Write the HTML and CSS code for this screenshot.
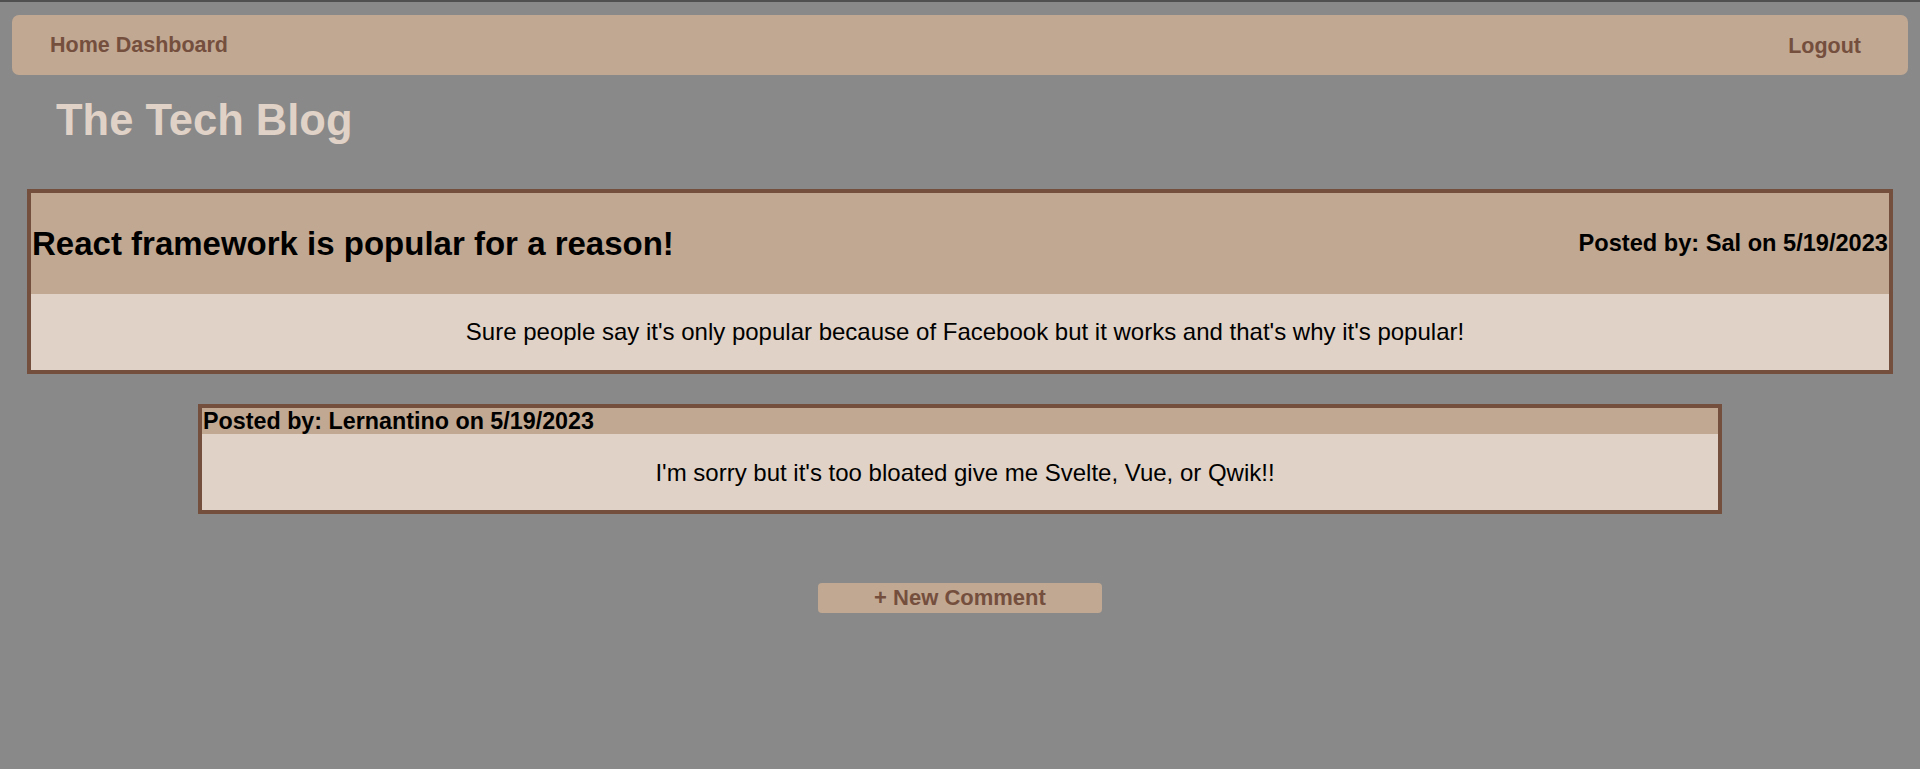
FILE: index.html
```html
<!DOCTYPE html>
<html lang="en">
<head>
<meta charset="utf-8">
<title>The Tech Blog</title>
<link rel="stylesheet" href="styles.css">
</head>
<body>
<nav class="navbar">
  <a class="nav-link" href="#">Home Dashboard</a>
  <a class="nav-link" href="#">Logout</a>
</nav>
<h1 class="site-title">The Tech Blog</h1>
<main>
  <article class="post">
    <header class="post-header">
      <h2 class="post-title">React framework is popular for a reason!</h2>
      <span class="post-meta">Posted by: Sal on 5/19/2023</span>
    </header>
    <div class="post-body">Sure people say it's only popular because of Facebook but it works and that's why it's popular!</div>
  </article>
  <article class="comment">
    <header class="comment-header">Posted by: Lernantino on 5/19/2023</header>
    <div class="comment-body">I'm sorry but it's too bloated give me Svelte, Vue, or Qwik!!</div>
  </article>
  <div class="actions">
    <button class="new-comment" type="button">+ New Comment</button>
  </div>
</main>
</body>
</html>
```
FILE: styles.css
```css
html, body {
  margin: 0;
  padding: 0;
}
body {
  background: #898989;
  border-top: 2px solid #505050;
  font-family: "Liberation Sans", Arial, sans-serif;
  color: #000;
  min-height: 767px;
}
.navbar {
  margin: 13px 12px 0;
  height: 60px;
  background: #c1a892;
  border-radius: 7px;
  display: flex;
  justify-content: space-between;
  align-items: center;
  padding: 0 47px 0 38px;
}
.nav-link {
  color: #754f3e;
  font-weight: bold;
  font-size: 21.5px;
  text-decoration: none;
}
.nav-link:last-child {
  padding-top: 3px;
}
.site-title {
  margin: 20px 0 0 56px;
  font-size: 43.5px;
  line-height: 50px;
  font-weight: bold;
  color: #e0d2c6;
}
main {
  margin-top: 44px;
}
.post {
  margin: 0 27px;
  border: 4px solid #754f3e;
}
.post-header {
  background: #c1a892;
  height: 101px;
  display: flex;
  justify-content: space-between;
  align-items: center;
}
.post-title {
  margin: 0 0 0 1px;
  font-size: 33px;
  font-weight: bold;
}
.post-meta {
  font-size: 23.6px;
  font-weight: bold;
  margin-right: 1px;
}
.post-body {
  background: #e0d2c6;
  height: 76px;
  display: flex;
  justify-content: center;
  align-items: center;
  font-size: 24px;
  padding-left: 10px;
}
.comment {
  margin: 30px 198px 0;
  border: 4px solid #754f3e;
}
.comment-header {
  background: #c1a892;
  height: 26px;
  line-height: 26px;
  font-size: 23.3px;
  font-weight: bold;
  padding-left: 1px;
}
.comment-body {
  background: #e0d2c6;
  height: 76px;
  display: flex;
  justify-content: center;
  align-items: center;
  font-size: 24px;
  padding: 2px 0 0 10px;
  box-sizing: border-box;
}
.actions {
  display: flex;
  justify-content: center;
  margin-top: 69px;
}
.new-comment {
  width: 284px;
  height: 30px;
  background: #c1a892;
  color: #754f3e;
  border: none;
  border-radius: 4px;
  font-family: "Liberation Sans", Arial, sans-serif;
  font-weight: bold;
  font-size: 22px;
  padding: 0;
  line-height: 30px;
}
```
